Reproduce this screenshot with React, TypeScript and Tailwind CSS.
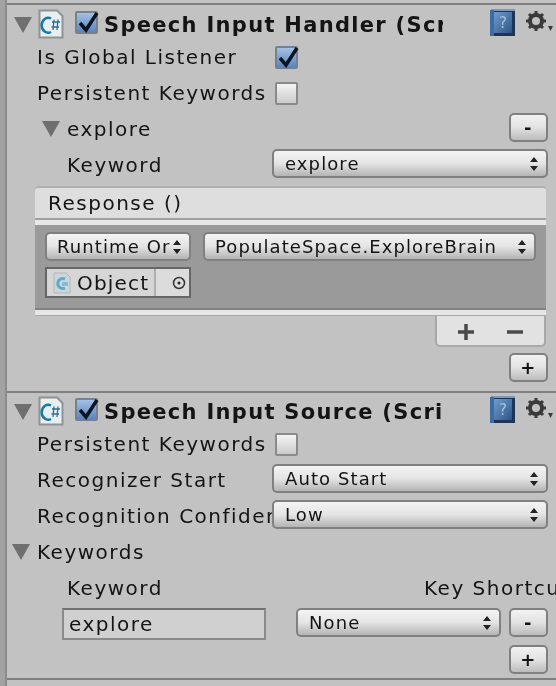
import type { ReactNode } from "react";

const Tri = () => (
  <svg width="18" height="16" viewBox="0 0 18 16" className="shrink-0">
    <path d="M0 0H18L9 16Z" fill="#6f6f6f" />
  </svg>
);

const ScriptIcon = ({ small }: { small?: boolean }) =>
  small ? (
    <svg width="18" height="22" viewBox="0 0 18 22" className="shrink-0 opacity-70">
      <path d="M1 1H13L17 5V21H1Z" fill="#c9d6dc" stroke="#a3a9ab" />
      <path d="M12 7A5 5 0 1 0 12 16" fill="none" stroke="#2f9ac9" strokeWidth="3" />
      <rect x="9" y="10" width="6" height="4" fill="#5fb3d8" />
    </svg>
  ) : (
    <svg width="26" height="30" viewBox="0 0 26 30" className="shrink-0">
      <path d="M1.500 1.500H19L24.500 7V28.500H1.500Z" fill="#e9eef0" stroke="#8d9396" strokeWidth="2" />
      <path d="M13 9.500A6.500 7.500 0 1 0 13 23" fill="none" stroke="#1878a8" strokeWidth="2.500" />
      <path d="M14 13H22M13.500 18H21M16 10.500L15 21M20 10.500L19 21" stroke="#2c6f96" strokeWidth="1.300" fill="none" />
    </svg>
  );

const Check = ({ on }: { on?: boolean }) => (
  <div
    className={`relative w-[23px] h-[23px] shrink-0 rounded-[2px] border-2 ${
      on
        ? "border-[#76818f] bg-gradient-to-b from-[#a4c0e4] to-[#5a86bf]"
        : "border-[#8a8a8a] bg-gradient-to-b from-[#f4f4f4] to-[#cbcbcb]"
    }`}
  >
    {on && (
      <svg width="26" height="24" viewBox="0 0 26 24" className="absolute left-[-1px] top-[-3px]">
        <path d="M4 13L10 20L21 3" fill="none" stroke="#0c1420" strokeWidth="3.500" />
      </svg>
    )}
  </div>
);

const HelpIcon = () => (
  <svg width="26" height="28" viewBox="0 0 26 28" className="shrink-0">
    <defs>
      <linearGradient id="helpFace" x1="0" y1="0" x2="1" y2="1">
        <stop offset="0" stopColor="#6d9dcc" />
        <stop offset="1" stopColor="#2f5588" />
      </linearGradient>
    </defs>
    <rect x="0" y="1" width="25" height="26" fill="#1f3557" />
    <rect x="1" y="0" width="24" height="2" fill="#7d98b8" />
    <rect x="4" y="3" width="18" height="21" fill="url(#helpFace)" />
    <rect x="0" y="1" width="4" height="26" fill="#3a6ea3" />
    <text x="9" y="19" fontSize="15" fill="#a9c0d8" fontFamily="DejaVu Sans">?</text>
  </svg>
);

const Gear = () => (
  <svg width="28" height="22" viewBox="0 0 28 22" className="shrink-0">
    <circle cx="10" cy="10" r="6" fill="none" stroke="#3a3a3a" strokeWidth="4" />
    <path
      d="M10 0V4M10 16V20M0 10H4M16 10H20M3 3L6 6M14 14L17 17M17 3L14 6M6 14L3 17"
      stroke="#3a3a3a"
      strokeWidth="3"
    />
    <path d="M22 15H27L24.500 20Z" fill="#3a3a3a" />
  </svg>
);

const Arrows = () => (
  <svg width="8" height="14" viewBox="0 0 8 14" className="shrink-0">
    <path d="M4 0L8 5H0ZM4 14L0 9H8Z" fill="#222" />
  </svg>
);

const Select = ({ label, className }: { label: string; className: string }) => (
  <div
    className={`flex items-center justify-between overflow-hidden h-[29px] rounded-[5px] border-2 border-[#808080] bg-gradient-to-b from-[#f4f4f4] via-[#e4e4e4] to-[#b4b4b4] pl-[10px] pr-[8px] text-[18px] tracking-[1.100px] ${className}`}
  >
    <span className="whitespace-nowrap overflow-hidden">{label}</span>
    <Arrows />
  </div>
);

const Btn = ({ label }: { label: string }) => (
  <div className="flex items-center justify-center w-[39px] h-[29px] rounded-[5px] border-2 border-[#808080] bg-gradient-to-b from-[#f2f2f2] via-[#e2e2e2] to-[#bcbcbc] text-[18px] font-bold leading-none">
    {label}
  </div>
);

const Row = ({ children, className }: { children: ReactNode; className: string }) => (
  <div className={`flex items-center h-[36px] ${className}`}>{children}</div>
);

const Label = ({ children, className = "" }: { children: ReactNode; className?: string }) => (
  <div className={`whitespace-nowrap overflow-hidden shrink-0 ${className}`}>{children}</div>
);

const Header = ({ title }: { title: string }) => (
  <div className="flex items-center h-[34px] pl-[7px]">
    <div className="mb-[3px]">
      <Tri />
    </div>
    <div className="ml-[6px] mb-[5px]">
      <ScriptIcon />
    </div>
    <div className="ml-[11px] mb-[7px]">
      <Check on />
    </div>
    <div className="ml-[6px] w-[339px] shrink-0 overflow-hidden whitespace-nowrap font-bold text-[21px] tracking-[1.300px]">
      {title}
    </div>
    <div className="ml-[47px] mb-[6px]">
      <HelpIcon />
    </div>
    <div className="ml-[10px] mb-[9px]">
      <Gear />
    </div>
  </div>
);

export default function App() {
  return (
    <div className="flex w-[556px] h-[686px] overflow-hidden bg-[#c2c2c2] text-[#141414] text-[20px] tracking-[1.500px] font-['DejaVu_Sans',sans-serif] blur-[0.5px]">
      <div className="w-[5px] shrink-0 bg-[#a2a2a2] border-r-2 border-[#8c8c8c] box-content" />
      <div className="flex-1 min-w-0 pt-[3px]">
        {/* Speech Input Handler */}
        <div className="border-t-2 border-[#7f7f7f] pt-[4px] h-[388px]">
          <Header title="Speech Input Handler (Script)" />
          <Row className="pl-[30px] mt-[-4px]">
            <Label className="w-[238px]">Is Global Listener</Label>
            <Check on />
          </Row>
          <Row className="pl-[30px]">
            <Label className="w-[238px]">Persistent Keywords</Label>
            <Check />
          </Row>
          <Row className="pl-[35px] pr-[8px]">
            <Tri />
            <Label className="ml-[7px]">explore</Label>
            <div className="ml-auto mb-[3px]">
              <Btn label="-" />
            </div>
          </Row>
          <Row className="pl-[60px] pr-[8px]">
            <Label className="w-[205px]">Keyword</Label>
            <Select label="explore" className="w-[276px] mb-[3px] pl-[11px]" />
          </Row>

          {/* Response list */}
          <div className="ml-[28px] mr-[10px] mt-[3px]">
            <div className="h-[34px] flex items-center pl-[13px] bg-[#dedede] rounded-t-[4px] border-t-2 border-[#b0b0b0] border-b-2 border-b-[#a0a0a0]">
              Response ()
            </div>
            <div className="h-[5px] bg-[#e8e8e8]" />
            <div className="h-[85px] bg-[#9a9a9a] pt-[7px] pl-[10px] pr-[10px] border-b-2 border-[#828282]">
              <div className="flex gap-[12px]">
                <Select label="Runtime Or" className="w-[146px] tracking-[0.900px]" />
                <Select label="PopulateSpace.ExploreBrain" className="flex-1" />
              </div>
              <div className="flex w-[146px] h-[31px] mt-[6px] border-2 border-[#666666]">
                <div className="flex flex-1 items-center gap-[6px] pl-[6px] bg-[#d6d6d6] overflow-hidden tracking-[1.200px]">
                  <ScriptIcon small />
                  <span>Object</span>
                </div>
                <div className="flex items-center pl-[16px] w-[35px] bg-[#dcdcdc] border-l-2 border-[#b0b0b0]">
                  <svg width="14" height="14" viewBox="0 0 14 14" className="shrink-0">
                    <circle cx="7" cy="7" r="5.500" fill="none" stroke="#333" strokeWidth="1.500" />
                    <circle cx="7" cy="7" r="1.500" fill="#222" />
                  </svg>
                </div>
              </div>
            </div>
            <div className="h-[6px] bg-[#e6e6e6] border-b border-[#a8a8a8]" />
            <div className="flex justify-end">
              <div className="flex items-center gap-[33px] w-[111px] h-[31px] pl-[21px] pt-[3px] bg-[#e2e2e2] rounded-b-[5px] border-2 border-t-0 border-[#a8a8a8]">
                <svg width="16" height="16" viewBox="0 0 16 16" className="shrink-0">
                  <path d="M8 0V16M0 8H16" stroke="#4a4a4a" strokeWidth="3.500" />
                </svg>
                <svg width="16" height="16" viewBox="0 0 16 16" className="shrink-0">
                  <path d="M0 8H16" stroke="#4a4a4a" strokeWidth="3.500" />
                </svg>
              </div>
            </div>
          </div>
          <div className="flex justify-end pr-[8px] mt-[6px]">
            <Btn label="+" />
          </div>
        </div>

        {/* Speech Input Source */}
        <div className="border-t-2 border-[#7f7f7f] pt-[3px] h-[287px]">
          <Header title="Speech Input Source (Script)" />
          <Row className="pl-[30px] mt-[-4px]">
            <Label className="w-[238px]">Persistent Keywords</Label>
            <Check />
          </Row>
          <Row className="pl-[30px] pr-[8px]">
            <Label className="w-[235px]">Recognizer Start</Label>
            <Select label="Auto Start" className="w-[276px] mb-[3px] pl-[11px]" />
          </Row>
          <Row className="pl-[30px] pr-[8px]">
            <Label className="w-[235px]">Recognition Confidence</Label>
            <Select label="Low" className="w-[276px] mb-[3px] pl-[11px]" />
          </Row>
          <Row className="pl-[5px]">
            <Tri />
            <Label className="ml-[7px]">Keywords</Label>
          </Row>
          <Row className="pl-[60px]">
            <Label className="w-[357px]">Keyword</Label>
            <Label>Key Shortcut</Label>
          </Row>
          <div className="flex pl-[55px] pr-[8px] mt-[2px]">
            <div className="flex items-center w-[204px] h-[32px] pl-[5px] border-2 border-[#8a8a8a] border-t-[#707070] bg-[#d0d0d0]">
              explore
            </div>
            <Select label="None" className="w-[205px] ml-[30px] pl-[11px]" />
            <div className="ml-auto">
              <Btn label="-" />
            </div>
          </div>
          <div className="flex justify-end pr-[8px] mt-[5px]">
            <Btn label="+" />
          </div>
        </div>
        <div className="border-t-2 border-[#7f7f7f]" />
      </div>
    </div>
  );
}
